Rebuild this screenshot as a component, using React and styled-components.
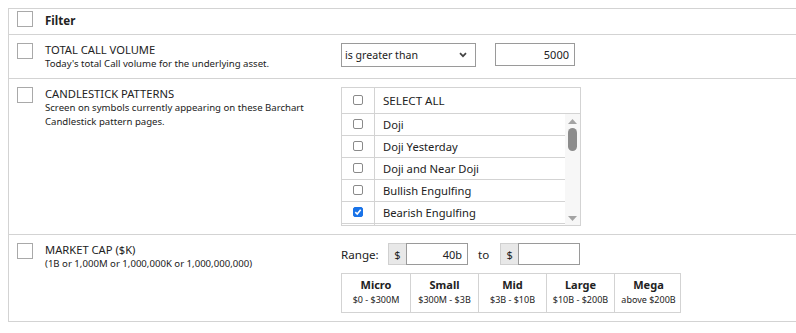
import React from "react";
import styled, { createGlobalStyle } from "styled-components";

const GlobalStyle = createGlobalStyle`
  body {
    margin: 8px 0 0 8px;
    background: #fff;
    font-family: "Noto Sans", "Open Sans", sans-serif;
    color: #222;
  }
`;

const Table = styled.div`
  border-top: 1px solid #d3d3d3;
  border-left: 1px solid #d3d3d3;
`;

const Row = styled.div`
  display: grid;
  grid-template-columns: 36px 296px 1fr;
  padding: ${({ pad }) => pad || "8px 0 8px 0"};
  border-bottom: 1px solid #d3d3d3;
  box-sizing: border-box;
`;

const BigCheck = styled.div`
  width: 14px;
  height: 14px;
  border: 1px solid #a9a9a9;
  margin-left: 8px;
  background: #fff;
`;

const HeaderLabel = styled.div`
  font-weight: 700;
  font-size: 11.6px;
  line-height: 16px;
  padding-top: 2px;
`;

const Title = styled.div`
  font-size: 11.2px;
  line-height: 14px;
  text-transform: uppercase;
`;

const Sub = styled.div`
  font-size: 9.6px;
  line-height: 13.5px;
  max-width: 265px;
`;

const Controls = styled.div`
  display: flex;
  align-items: flex-start;
  gap: ${({ gap }) => gap || "0"};
`;

const SelectBox = styled.div`
  width: 135px;
  height: 24px;
  box-sizing: border-box;
  border: 1px solid #9a9a9a;
  display: flex;
  align-items: center;
  justify-content: space-between;
  padding: 0 8px 0 3px;
  font-size: 10.6px;
`;

const NumInput = styled.div`
  width: ${({ w }) => w}px;
  height: ${({ h }) => h || 24}px;
  box-sizing: border-box;
  border: 1px solid #9a9a9a;
  display: flex;
  align-items: center;
  justify-content: flex-end;
  padding-right: 5px;
  font-size: 11px;
`;

const ListBox = styled.div`
  width: 240px;
  height: 139px;
  box-sizing: border-box;
  border: 1px solid #d3d3d3;
  display: flex;
  flex-direction: column;
  overflow: hidden;
`;

const ListHead = styled.div`
  display: grid;
  grid-template-columns: 33px 1fr;
  height: 25px;
  flex-shrink: 0;
  border-bottom: 1px solid #d3d3d3;
`;

const ListBody = styled.div`
  display: flex;
  flex: 1;
  min-height: 0;
`;

const Rows = styled.div`
  flex: 1;
  overflow: hidden;
`;

const ListRow = styled.div`
  display: grid;
  grid-template-columns: 33px 1fr;
  height: 22px;
  border-bottom: 1px solid #d3d3d3;
  box-sizing: border-box;
`;

const CheckCell = styled.div`
  border-right: 1px solid #d3d3d3;
  display: flex;
  justify-content: center;
  padding-top: ${({ top }) => top || 5}px;
  box-sizing: border-box;
`;

const LabelCell = styled.div`
  font-size: ${({ caps }) => (caps ? "11.6px" : "11.2px")};
  padding-left: 8px;
  display: flex;
  align-items: center;
`;

const SmallCheck = styled.div`
  width: 10px;
  height: 10px;
  box-sizing: border-box;
  border-radius: 2px;
  border: 1px solid ${({ on }) => (on ? "#1a73e8" : "#8a8a8a")};
  background: ${({ on }) => (on ? "#1a73e8" : "#fff")};
  display: flex;
  align-items: center;
  justify-content: center;
`;

const Scrollbar = styled.div`
  width: 15px;
  flex-shrink: 0;
  background: #f7f7f7;
  display: flex;
  flex-direction: column;
  align-items: center;
  justify-content: space-between;
  padding: 5px 0 4px;
  box-sizing: border-box;
`;

const Thumb = styled.div`
  width: 9px;
  height: 23px;
  border-radius: 4.5px;
  background: #8c8c8c;
  margin-top: 4px;
`;

const ScrollTrack = styled.div`
  flex: 1;
  display: flex;
  flex-direction: column;
  align-items: center;
`;

const RangeWrap = styled.div`
  display: flex;
  flex-direction: column;
  gap: 8px;
`;

const RangeLine = styled.div`
  display: flex;
  align-items: center;
  font-size: 11.6px;
`;

const RangeLabel = styled.span`
  width: 47px;
`;

const ToLabel = styled.span`
  margin: 0 11px 0 10px;
`;

const Addon = styled.div`
  width: 18px;
  height: 22px;
  box-sizing: border-box;
  background: #e8e8e8;
  border: 1px solid #d0d0d0;
  border-right: none;
  display: flex;
  align-items: center;
  justify-content: center;
  font-size: 11px;
`;

const CapTable = styled.div`
  display: grid;
  grid-template-columns: repeat(5, 68px);
  border: 1px solid #d3d3d3;
  width: 340px;
  box-sizing: border-box;
`;

const CapCell = styled.div`
  height: 38px;
  border-left: ${({ first }) => (first ? "none" : "1px solid #d3d3d3")};
  display: flex;
  flex-direction: column;
  align-items: center;
  padding-top: 3px;
  box-sizing: border-box;
`;

const CapName = styled.div`
  font-size: 11px;
  font-weight: 700;
  line-height: 15px;
`;

const CapRange = styled.div`
  font-size: 9px;
  line-height: 14px;
  margin-top: 1px;
`;

const Tick = () => (
  <svg width="8" height="8" viewBox="0 0 8 8">
    <path d="M1.3 4.2 L3.2 6 L6.7 1.8" fill="none" stroke="#fff" strokeWidth="1.6" />
  </svg>
);

const Chevron = () => (
  <svg width="8" height="6" viewBox="0 0 8 6">
    <path d="M1 1.2 L4 4.2 L7 1.2" fill="none" stroke="#444" strokeWidth="1.7" />
  </svg>
);

const Arrow = ({ up }) => (
  <svg width="9" height="5" viewBox="0 0 9 5">
    <path d={up ? "M0 5 L4.5 0 L9 5Z" : "M0 0 L4.5 5 L9 0Z"} fill="#a3a3a3" />
  </svg>
);

const patterns = [
  { name: "Doji" },
  { name: "Doji Yesterday" },
  { name: "Doji and Near Doji" },
  { name: "Bullish Engulfing" },
  { name: "Bearish Engulfing", on: true },
  { name: "" },
];

const caps = [
  ["Micro", "$0 - $300M"],
  ["Small", "$300M - $3B"],
  ["Mid", "$3B - $10B"],
  ["Large", "$10B - $200B"],
  ["Mega", "above $200B"],
];

export default function App() {
  return (
    <>
      <GlobalStyle />
      <Table>
        <Row pad="2px 0 5px 0">
          <BigCheck />
          <HeaderLabel>Filter</HeaderLabel>
        </Row>
        <Row pad="8px 0 7.5px 0">
          <BigCheck />
          <div>
            <Title>Total Call Volume</Title>
            <Sub>Today's total Call volume for the underlying asset.</Sub>
          </div>
          <Controls gap="19px">
            <SelectBox>
              <span>is greater than</span>
              <Chevron />
            </SelectBox>
            <NumInput w={80} h={23}>5000</NumInput>
          </Controls>
        </Row>
        <Row>
          <BigCheck />
          <div>
            <Title>Candlestick Patterns</Title>
            <Sub>
              Screen on symbols currently appearing on these Barchart
              Candlestick pattern pages.
            </Sub>
          </div>
          <Controls>
            <ListBox>
              <ListHead>
                <CheckCell top={7}>
                  <SmallCheck />
                </CheckCell>
                <LabelCell caps>SELECT ALL</LabelCell>
              </ListHead>
              <ListBody>
                <Rows>
                  {patterns.map((p, i) => (
                    <ListRow key={i}>
                      <CheckCell>
                        {p.name && (
                          <SmallCheck on={p.on}>{p.on && <Tick />}</SmallCheck>
                        )}
                      </CheckCell>
                      <LabelCell>{p.name}</LabelCell>
                    </ListRow>
                  ))}
                </Rows>
                <Scrollbar>
                  <ScrollTrack>
                    <Arrow up />
                    <Thumb />
                  </ScrollTrack>
                  <Arrow />
                </Scrollbar>
              </ListBody>
            </ListBox>
          </Controls>
        </Row>
        <Row>
          <BigCheck />
          <div>
            <Title>Market Cap ($K)</Title>
            <Sub>(1B or 1,000M or 1,000,000K or 1,000,000,000)</Sub>
          </div>
          <RangeWrap>
            <RangeLine>
              <RangeLabel>Range:</RangeLabel>
              <Addon>$</Addon>
              <NumInput w={62} h={22}>40b</NumInput>
              <ToLabel>to</ToLabel>
              <Addon>$</Addon>
              <NumInput w={62} h={22} />
            </RangeLine>
            <CapTable>
              {caps.map(([n, r], i) => (
                <CapCell key={n} first={i === 0}>
                  <CapName>{n}</CapName>
                  <CapRange>{r}</CapRange>
                </CapCell>
              ))}
            </CapTable>
          </RangeWrap>
        </Row>
      </Table>
    </>
  );
}
